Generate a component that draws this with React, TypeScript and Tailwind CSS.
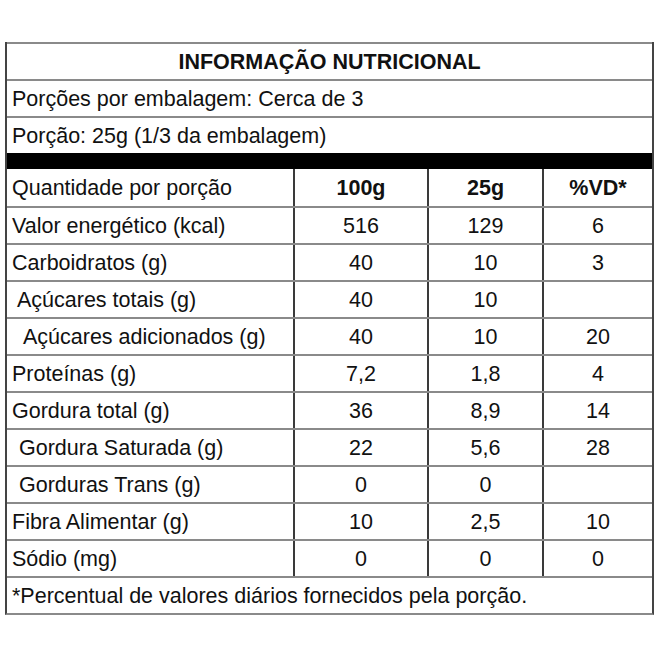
const rows: { label: string; indent: string; a: string; b: string; vd: string }[] = [
  { label: "Valor energético (kcal)", indent: "pl-[5px]", a: "516", b: "129", vd: "6" },
  { label: "Carboidratos (g)", indent: "pl-[5px]", a: "40", b: "10", vd: "3" },
  { label: "Açúcares totais (g)", indent: "pl-[10px]", a: "40", b: "10", vd: "" },
  { label: "Açúcares adicionados (g)", indent: "pl-[16px]", a: "40", b: "10", vd: "20" },
  { label: "Proteínas (g)", indent: "pl-[5px]", a: "7,2", b: "1,8", vd: "4" },
  { label: "Gordura total (g)", indent: "pl-[5px]", a: "36", b: "8,9", vd: "14" },
  { label: "Gordura Saturada (g)", indent: "pl-[12px]", a: "22", b: "5,6", vd: "28" },
  { label: "Gorduras Trans (g)", indent: "pl-[12px]", a: "0", b: "0", vd: "" },
  { label: "Fibra Alimentar (g)", indent: "pl-[5px]", a: "10", b: "2,5", vd: "10" },
  { label: "Sódio (mg)", indent: "pl-[5px]", a: "0", b: "0", vd: "0" },
]

export default function App() {
  return (
    <div className="w-[660px] h-[660px] bg-white pt-[42px] pl-[5px] text-[#111] text-[21.5px] font-['Liberation_Sans',Arial,sans-serif]">
      <div className="w-[649px] border-x-2 border-x-[#444] border-b-2 border-b-[#8a8a8a]">
        {/* cabeçalho */}
        <div className="h-[37px] pt-[2px] border-t-2 border-[#8a8a8a] flex items-center justify-center font-bold">
          INFORMAÇÃO NUTRICIONAL
        </div>
        <div className="h-[37px] pt-[2px] border-t-2 border-[#8a8a8a] flex items-center pl-[5px]">
          Porções por embalagem: Cerca de 3
        </div>
        <div className="h-[37px] pt-[2px] border-t-2 border-[#8a8a8a] flex items-center pl-[5px]">
          Porção: 25g (1/3 da embalagem)
        </div>
        <div className="h-[16px] bg-black" />

        {/* tabela */}
        <div className="grid grid-cols-[286px_134px_115px_110px]">
          <div className="h-[37px] pt-[2px] flex items-center pl-[5px]">Quantidade por porção</div>
          <div className="h-[37px] pt-[2px] flex items-center justify-center border-l-2 border-[#3a3a3a] font-bold">100g</div>
          <div className="h-[37px] pt-[2px] flex items-center justify-center border-l-2 border-[#3a3a3a] font-bold">25g</div>
          <div className="h-[37px] pt-[2px] flex items-center justify-center border-l-2 border-[#3a3a3a] font-bold">%VD*</div>
        </div>
        {rows.map((r) => (
          <div key={r.label} className="grid grid-cols-[286px_134px_115px_110px] border-t-2 border-[#8a8a8a]">
            <div className={`h-[35px] pt-[2px] flex items-center ${r.indent}`}>{r.label}</div>
            <div className="h-[35px] pt-[2px] flex items-center justify-center border-l-2 border-[#3a3a3a]">{r.a}</div>
            <div className="h-[35px] pt-[2px] flex items-center justify-center border-l-2 border-[#3a3a3a]">{r.b}</div>
            <div className="h-[35px] pt-[2px] flex items-center justify-center border-l-2 border-[#3a3a3a]">{r.vd}</div>
          </div>
        ))}
        <div className="h-[37px] pt-[2px] border-t-2 border-[#8a8a8a] flex items-center pl-[5px]">
          *Percentual de valores diários fornecidos pela porção.
        </div>
      </div>
    </div>
  )
}
